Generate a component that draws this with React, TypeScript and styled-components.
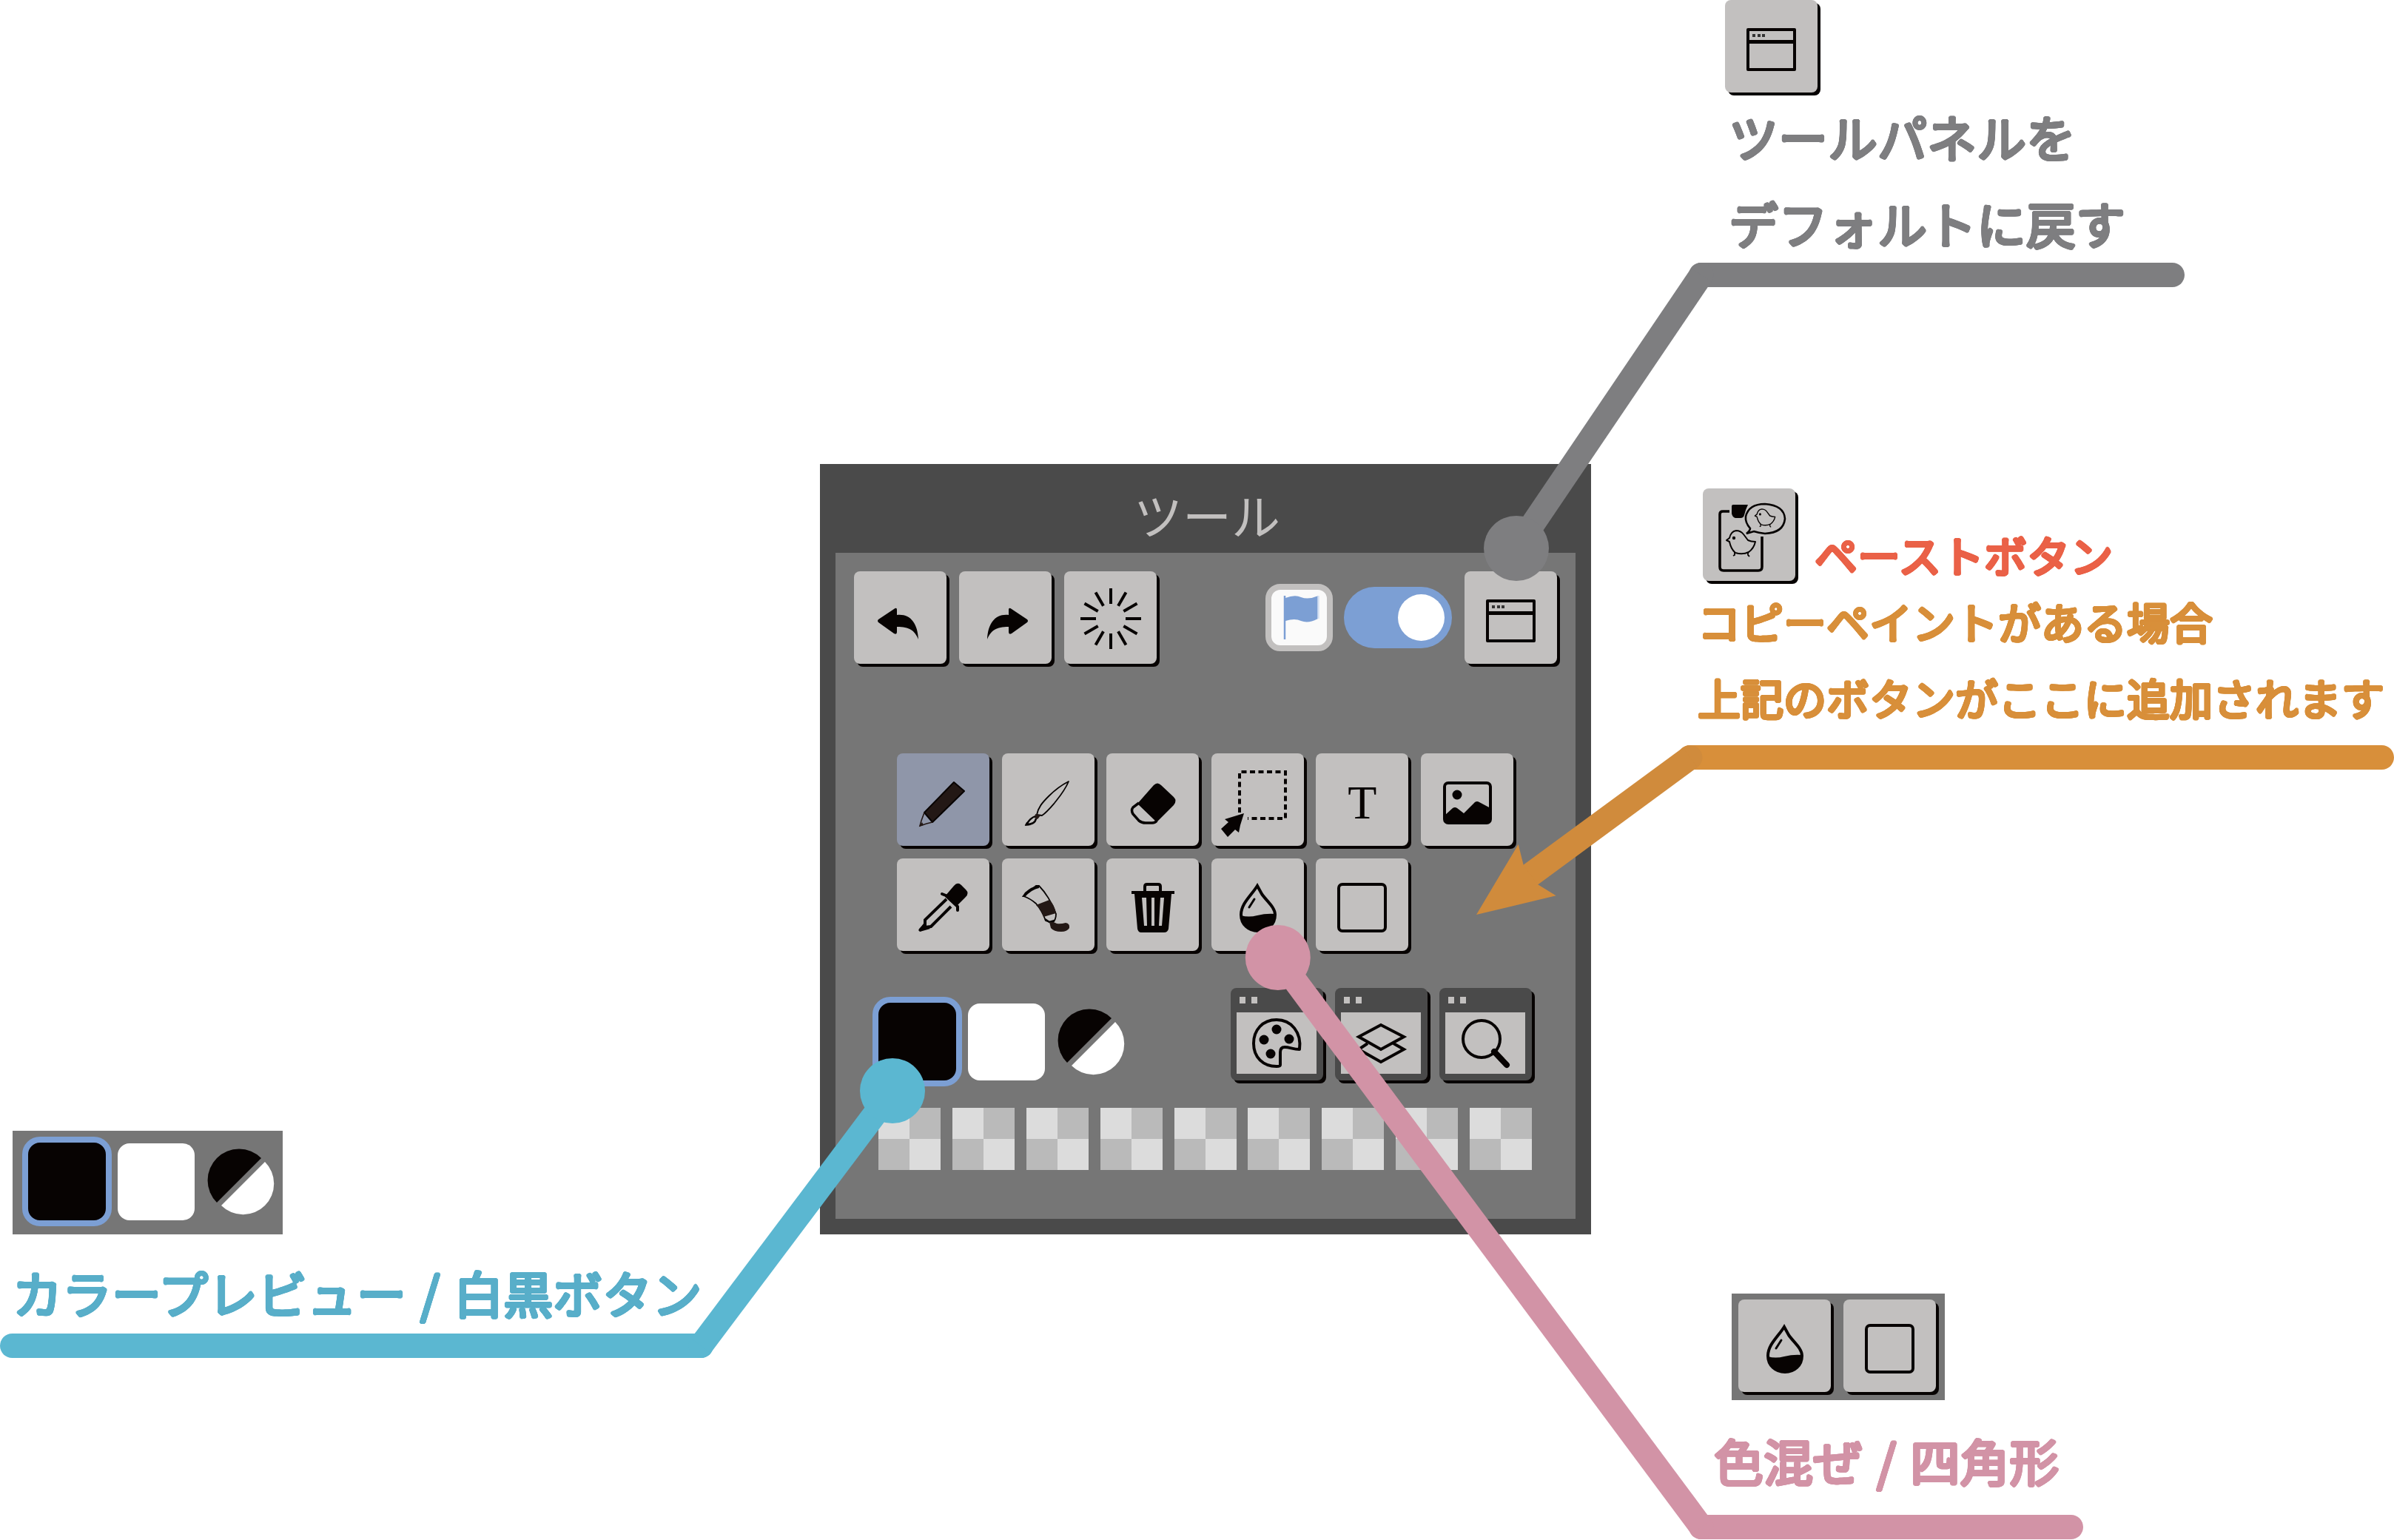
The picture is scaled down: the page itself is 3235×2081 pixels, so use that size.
import React, { useCallback, useLayoutEffect, useRef, useState } from "react";
import styled, { createGlobalStyle, css } from "styled-components";

const color = {
  frame: "#4a4a4a",
  body: "#767676",
  key: "#c2c0bf",
  keyActive: "#8f96a9",
  ink: "#070302",
  soot: "#231815",
  blue: "#7c9fd4",
  gray: "#7e7e80",
  amber: "#d88f3a",
  amberDark: "#d08b3c",
  red: "#ea6147",
  cyan: "#5bb7d1",
  cyanText: "#58aec9",
  pink: "#d293a6",
};

const GlobalStyle = createGlobalStyle`
  *, *::before, *::after { box-sizing: border-box; }
  body {
    margin: 0;
    background: #fff;
    font-family: "Noto Sans CJK JP", "Noto Sans", sans-serif;
  }
  button { font: inherit; }
`;

/* Thickens the strokes evenly in every direction, which also rounds their ends. */
const rounded = (r: number) => {
  const steps = 16;
  return Array.from({ length: steps }, (_, i) => {
    const a = (i / steps) * Math.PI * 2;
    return `${(Math.cos(a) * r).toFixed(2)}px ${(Math.sin(a) * r).toFixed(2)}px 0 currentColor`;
  }).join(", ");
};

/* ---------- layout ---------- */

const Page = styled.main`
  position: relative;
  display: grid;
  grid-template-columns: minmax(0, 1108fr) 1042px minmax(0, 1085fr);
  align-items: start;
  min-height: 100vh;
`;

const LeftColumn = styled.div`
  padding-top: 1528px;
`;

const CenterColumn = styled.div`
  padding-top: 627px;
`;

const RightColumn = styled.div`
  display: flex;
  flex-direction: column;
  padding-left: 117px;
`;

const Callout = styled.section<{ $color: string; $width?: number; $indent?: number; $top?: number }>`
  display: flex;
  flex-direction: column;
  align-items: flex-start;
  width: ${(p) => (p.$width ? `${p.$width}px` : "auto")};
  margin-left: ${(p) => p.$indent ?? 0}px;
  margin-top: ${(p) => p.$top ?? 0}px;
  color: ${(p) => p.$color};
`;

const CalloutHead = styled.div<{ $indent: number }>`
  display: flex;
  align-items: flex-end;
  gap: 26px;
  margin-left: ${(p) => p.$indent}px;
`;

const CalloutText = styled.p<{ $indent: number; $size: number; $line: number; $top?: number }>`
  margin: ${(p) => p.$top ?? 0}px 0 0 ${(p) => p.$indent}px;
  font-size: ${(p) => p.$size}px;
  line-height: ${(p) => p.$line}px;
  font-weight: 400;
  white-space: nowrap;
  text-shadow: ${rounded(2)};
`;

const ButtonName = styled.strong`
  padding-bottom: 6px;
  font-size: 58px;
  line-height: 60px;
  font-weight: 400;
  white-space: nowrap;
  color: ${color.red};
  text-shadow: ${rounded(2)};
`;

const Slash = styled.span`
  padding: 0 4px;
`;

const Rule = styled.div<{ $color: string; $top: number }>`
  align-self: stretch;
  height: 33px;
  margin-top: ${(p) => p.$top}px;
  border-radius: 17px;
  background: ${(p) => p.$color};
`;

const Sample = styled.div<{ $indent: number; $pad: string }>`
  display: flex;
  gap: 17px;
  margin-left: ${(p) => p.$indent}px;
  padding: ${(p) => p.$pad};
  background: ${color.body};
`;

/* ---------- panel ---------- */

const Panel = styled.section`
  padding: 0 21px 21px;
  background: ${color.frame};
`;

const PanelTitle = styled.h1`
  margin: 0;
  height: 120px;
  padding: 14px 0 0 4px;
  font-size: 66px;
  line-height: 106px;
  font-weight: 400;
  text-align: center;
  color: ${color.key};
`;

const PanelBody = styled.div`
  display: flex;
  flex-direction: column;
  padding: 25px 25px 66px;
  background: ${color.body};
`;

const TopBar = styled.div`
  display: flex;
  justify-content: space-between;
  margin-bottom: 121px;
`;

const Group = styled.div<{ $gap: number }>`
  display: flex;
  align-items: center;
  gap: ${(p) => p.$gap}px;
`;

const ToolGrid = styled.div`
  display: grid;
  grid-template-columns: repeat(6, 125px);
  justify-content: space-between;
  row-gap: 17px;
  margin: 0 59px 50px 58px;
`;

const ColorBar = styled.div`
  display: flex;
  justify-content: space-between;
  margin: 0 34px 29px 25px;
`;

const PreviewGroup = styled.div`
  display: flex;
  align-items: center;
  align-self: flex-end;
`;

const WindowKeyRow = styled.div`
  display: flex;
  gap: 16px;
  padding-bottom: 8px;
`;

const PaletteRow = styled.div`
  display: flex;
  justify-content: space-between;
  margin: 0 34px 0 33px;
`;

/* ---------- controls ---------- */

const keyShape = css`
  flex: none;
  display: block;
  width: 125px;
  height: 125px;
  padding: 0;
  border: 0;
  border-radius: 8px;
  box-shadow: 4px 4px 0 ${color.ink};
  cursor: pointer;
`;

const Key = styled.button<{ $active?: boolean }>`
  ${keyShape}
  background: ${(p) => (p.$active ? color.keyActive : color.key)};
  color: ${color.ink};
`;

const LetterKey = styled(Key)`
  padding-top: 9px;
  font-family: "Liberation Serif", serif;
  font-size: 64px;
  line-height: 116px;
`;

const WindowKey = styled.button`
  ${keyShape}
  background: ${color.frame};
  color: ${color.ink};
`;

const Drawing = styled.svg`
  display: block;
`;

const FlagLabel = styled.label`
  width: 91px;
  height: 91px;
  border: 8px solid ${color.key};
  border-radius: 20px;
  background: #fafafa;
`;

const Toggle = styled.input`
  appearance: none;
  position: relative;
  width: 146px;
  height: 83px;
  margin: 0 2px 0 0;
  border-radius: 42px;
  background: ${color.key};
  cursor: pointer;
  &::before {
    content: "";
    position: absolute;
    top: 10px;
    left: 10px;
    width: 63px;
    height: 63px;
    border-radius: 50%;
    background: #fff;
  }
  &:checked { background: ${color.blue}; }
  &:checked::before { left: 73px; }
`;

const PreviewSwatch = styled.button<{ $fill: string; $selected?: boolean }>`
  width: ${(p) => (p.$selected ? 121 : 104)}px;
  height: ${(p) => (p.$selected ? 121 : 104)}px;
  margin-right: ${(p) => (p.$selected ? 8 : 17)}px;
  padding: 0;
  border: ${(p) => (p.$selected ? `8px solid ${color.blue}` : "0")};
  border-radius: ${(p) => (p.$selected ? 24 : 16)}px;
  background: ${(p) => p.$fill};
  cursor: pointer;
`;

const SplitButton = styled.button`
  width: 91px;
  height: 91px;
  padding: 0;
  border: 0;
  background: transparent;
  cursor: pointer;
`;

const PaletteSwatch = styled.button`
  width: 84px;
  height: 84px;
  padding: 0;
  border: 0;
  background: conic-gradient(#bababa 25%, #dcdcdc 0 50%, #bababa 0 75%, #dcdcdc 0);
  cursor: pointer;
`;

const Overlay = styled.svg`
  position: absolute;
  inset: 0;
  width: 100%;
  height: 100%;
  overflow: visible;
  pointer-events: none;
`;

/* ---------- drawings ---------- */

const Glyph = ({ children, size = 125 }: { children: React.ReactNode; size?: number }) => (
  <Drawing width={size} height={size} viewBox={`0 0 ${size} ${size}`} fill="none" aria-hidden="true">
    {children}
  </Drawing>
);

const arrowPath =
  "M33 65 L54 51 Q58 48 58 52 V59 C76 57 86 70 87 92 C82 80 75 75 58 75 V82 Q58 86 54 84 L33 69 Q31 67 33 65Z";

const UndoIcon = () => (
  <Glyph>
    <path d={arrowPath} fill="currentColor" />
  </Glyph>
);

const RedoIcon = () => (
  <Glyph>
    <path d={arrowPath} fill="currentColor" transform="translate(125 0) scale(-1 1)" />
  </Glyph>
);

const BurstIcon = () => (
  <Glyph>
    <g stroke="currentColor" strokeWidth="4">
      {Array.from({ length: 12 }, (_, i) => (
        <path key={i} d="M63 23 V44" transform={`rotate(${i * 30} 63 64)`} />
      ))}
    </g>
  </Glyph>
);

const WindowIcon = () => (
  <Glyph>
    <rect x="31" y="40" width="63" height="54" stroke="currentColor" strokeWidth="4" strokeLinejoin="round" />
    <path d="M31 56.5 H94" stroke="currentColor" strokeWidth="5" />
    <path d="M37 46h4v4h-4z M44 46h4v4h-4z M50 46h4v4h-4z" fill="#333" />
  </Glyph>
);

const PencilIcon = () => (
  <Glyph>
    <path d="M77 39 L91 51 L48 93 L37 80 Z" fill={color.soot} stroke="currentColor" strokeWidth="2" strokeLinejoin="round" />
    <path d="M37 80 L33 91 L31 98 L40 95 L48 93" stroke={color.soot} strokeWidth="1.6" />
    <path d="M34 93 L30 99 L36 97 Z" fill={color.soot} />
  </Glyph>
);

const BrushIcon = () => (
  <Glyph>
    <path d="M90 38 C80 43 72 49 63 58 C54 67 49 73 47 83 L54 84 C60 80 65 74 71 67 C79 57 85 50 90 38Z" stroke="currentColor" strokeWidth="1.8" strokeLinejoin="round" />
    <path d="M45 82 L44 87 L48 89 L52 84 Z" fill={color.soot} />
    <path d="M45 85 C37 88 36 92 33 96 C39 96 45 95 46 88" stroke="currentColor" strokeWidth="2.4" />
    <path d="M31 98 L33 93 L39 97 Z" fill="currentColor" />
  </Glyph>
);

const EraserIcon = () => (
  <Glyph>
    <path d="M42 68 L64 43 Q69 38 74 43 L91 59 Q96 64 91 70 L68 93 Z" fill="currentColor" />
    <path d="M44 67 L36 73 Q33 77 36 82 L44 91 Q48 94 53 94 H62 Q66 94 68 91" stroke="currentColor" strokeWidth="3.5" />
  </Glyph>
);

const SelectIcon = () => (
  <Glyph>
    <path d="M38 80 V25 H100 V88 H49" stroke="currentColor" strokeWidth="4" strokeDasharray="7 4.5" />
    <path d="M44 81 L18 89 L23 93 L13 102 L22 113 L32 103 L37 107 L39 97 Z" fill="currentColor" />
  </Glyph>
);

const ImageIcon = () => (
  <Glyph>
    <rect x="32" y="40" width="62" height="54" rx="5" stroke="currentColor" strokeWidth="4" />
    <circle cx="49" cy="56" r="6.5" fill="currentColor" />
    <path d="M32 84 L43 74 Q46 72 49 74 L58 81 L73 66 Q76 64 79 66 L94 74 V92 Q94 94 92 94 H36 Q32 94 32 90Z" fill="currentColor" />
  </Glyph>
);

const DropperIcon = () => (
  <Glyph>
    <path d="M65 51 L77 37 Q82 31 87 36 L93 42 Q98 47 93 52 L80 65 Z" fill="currentColor" />
    <path d="M61 48 L66 50 L82 65 L82 70" stroke="currentColor" strokeWidth="4" strokeLinecap="round" strokeLinejoin="round" />
    <path d="M67 55 L38 83 V90 L31 97 M73 65 L46 92 L38 93" stroke="currentColor" strokeWidth="4" />
    <path d="M36 88 L29 97 L31 99 L45 95 Z" fill="currentColor" />
  </Glyph>
);

const TubeIcon = () => (
  <Glyph>
    <path d="M29 51 L46 37 L50 37 C58 45 68 60 73 75 C73 81 72 84 68 87 L59 84 C56 76 52 68 46 61 Q38 54 29 51Z" stroke="currentColor" strokeWidth="1.8" />
    <path d="M27 52 L31 46 Q40 38 50 36 L50 40 Q40 42 31 52Z" fill="currentColor" />
    <path d="M46 63 L64 56 Q71 63 73 74 L56 79 Q54 70 46 63Z" fill={color.soot} />
    <path d="M58 82 L64 86 L71 84" stroke="currentColor" strokeWidth="2.5" />
    <path d="M64 86 Q69 85 74 88 Q79 89 86 87 Q92 88 91 94 Q88 99 80 99 Q70 99 66 94Z" fill={color.soot} />
  </Glyph>
);

const TrashIcon = () => (
  <Glyph>
    <path d="M52 46 V38 Q52 35 55 35 H70 Q73 35 73 38 V46" stroke="currentColor" strokeWidth="4" />
    <path
      fill="currentColor"
      fillRule="evenodd"
      d="M34 44 H92 V48 H88 L84 95 Q83 100 78 100 H47 Q43 100 42 95 L38 48 H34Z M48 53 L51 91 H55 L54 53Z M61 53 V91 H65 V53Z M73 53 L71 91 H75 L78 53Z"
    />
  </Glyph>
);

const DropIcon = () => (
  <Glyph>
    <path d="M62 37 C54 50 40 61 40 76 C40 89 50 98 63 98 C76 98 86 89 86 76 C86 66 75 58 68 48 Z" stroke="currentColor" strokeWidth="4" strokeLinejoin="miter" />
    <path d="M40 77 Q50 80 62 77 Q74 74 86 75 C87 89 76 98 63 98 C50 98 40 89 40 77Z" fill="currentColor" />
    <path d="M58 55 L51 66" stroke="currentColor" strokeWidth="3" strokeLinecap="round" />
  </Glyph>
);

const SquareIcon = () => (
  <Glyph>
    <rect x="31" y="35" width="63" height="63" rx="5" stroke="currentColor" strokeWidth="4" />
  </Glyph>
);

const WindowFrame = () => (
  <>
    <path d="M12 12h8v9h-8z M28 12h8v9h-8z" fill={color.key} />
    <path d="M8 33h108v83H8z" fill={color.key} />
  </>
);

const PaletteIcon = () => (
  <Glyph>
    <WindowFrame />
    <path d="M93 83 C96 60 82 43 62 43 C43 43 31 57 31 75 C31 94 44 106 62 106 Q67 106 67 104 V87 Q67 80 73 80 C80 80 84 83 93 83Z" stroke="currentColor" strokeWidth="4" strokeLinejoin="round" />
    <g fill="currentColor">
      <circle cx="62" cy="56" r="6.5" />
      <circle cx="45" cy="70" r="6.5" />
      <circle cx="79" cy="69" r="6.5" />
      <circle cx="54" cy="89" r="6.5" />
    </g>
  </Glyph>
);

const LayersIcon = () => (
  <Glyph>
    <WindowFrame />
    <g stroke="currentColor" strokeWidth="4">
      <path d="M62 50 L93 66 L62 83 L32 66 Z" />
      <path d="M44 75 L32 83 L62 100 L93 83 L79 75" />
    </g>
  </Glyph>
);

const ZoomIcon = () => (
  <Glyph>
    <WindowFrame />
    <circle cx="57" cy="69" r="25" stroke="currentColor" strokeWidth="4" />
    <path d="M74 86 L91 104" stroke="currentColor" strokeWidth="8" strokeLinecap="round" />
  </Glyph>
);

const Chick = () => (
  <>
    <path d="M32 70 L36 67 Q38 58 45 57 Q51 57 55 62 L61 70 Q65 72 71 72 Q69 81 62 86 Q54 90 44 87 Q38 82 36 72 Z" stroke="currentColor" strokeWidth="2" strokeLinejoin="round" />
    <circle cx="42" cy="67" r="2.2" fill="currentColor" />
    <path d="M43 86 V90 L41 91 M61 86 V90 L63 92" stroke="currentColor" strokeWidth="1.8" />
  </>
);

const PasteIcon = () => (
  <Glyph>
    <path d="M36 31 H27 Q23 31 23 35 V106 Q23 111 28 111 H75 Q80 111 80 106 V65" stroke="currentColor" strokeWidth="3.6" />
    <path d="M39 24 Q39 22 41 22 H61 Q58 28 56 36 Q55 40 51 40 H44 Q40 39 39 34Z" fill="currentColor" />
    <path d="M64 54 Q57 46 58 38 Q62 21 84 21 Q110 23 111 41 Q109 60 84 61 Q75 60 69 58 L59 61 Q64 57 64 54Z" stroke="currentColor" strokeWidth="2.6" />
    <Chick />
    <g transform="translate(48 -12) scale(0.7)">
      <Chick />
    </g>
  </Glyph>
);

const FlagIcon = () => (
  <Drawing width="75" height="75" viewBox="8 8 75 75" fill="none" aria-hidden="true">
    <path d="M26 16 V75" stroke={color.blue} strokeWidth="2.5" />
    <path d="M27 19 Q40 14 48 18 Q58 22 71 16 V47 Q58 54 48 50 Q40 46 27 50Z" fill={color.blue} />
    <path d="M71.5 16 V47" stroke="#d5e0f2" strokeWidth="2.5" />
  </Drawing>
);

const SplitIcon = () => (
  <Glyph size={91}>
    <path d="M13 74 A42 42 0 0 1 73 14 Z" fill={color.ink} />
    <path d="M78 19 A41 41 0 0 1 19 78 Z" fill="#fff" />
  </Glyph>
);

/* ---------- parts ---------- */

type NodeRef = (el: HTMLElement | null) => void;

const ColorPreview = ({ anchor }: { anchor?: NodeRef }) => (
  <PreviewGroup>
    <PreviewSwatch ref={anchor} $fill={color.ink} $selected aria-label="黒" />
    <PreviewSwatch $fill="#fff" aria-label="白" />
    <SplitButton aria-label="白黒">
      <SplitIcon />
    </SplitButton>
  </PreviewGroup>
);

/* Each connector leaves one end of a callout rule and lands on a spot of its target. */
const connectors = [
  { id: "gray", target: "reset", dx: 70, dy: -31, side: "left", color: color.gray, arrow: false },
  { id: "amber", target: "slot", dx: 75, dy: 76, side: "left", color: color.amberDark, arrow: true },
  { id: "cyan", target: "preview", dx: 27, dy: 127, side: "right", color: color.cyan, arrow: false },
  { id: "pink", target: "mix", dx: 90, dy: 134, side: "left", color: color.pink, arrow: false },
];

type Line = { id: string; color: string; arrow: boolean; x1: number; y1: number; x2: number; y2: number };

const HEAD = 88;

const Connector = ({ line }: { line: Line }) => {
  const { x1, y1, x2, y2 } = line;
  const length = Math.hypot(x2 - x1, y2 - y1);
  const k = line.arrow ? (length - HEAD) / length : 1;
  const angle = (Math.atan2(y1 - y2, x1 - x2) * 180) / Math.PI;
  return (
    <g>
      <circle cx={x1} cy={y1} r="16.5" fill={line.color} />
      <path d={`M${x1} ${y1} L${x1 + (x2 - x1) * k} ${y1 + (y2 - y1) * k}`} stroke={line.color} strokeWidth="33" />
      {line.arrow ? (
        <path d="M0 0 L102 -43 L91 -16 V16 L102 43 Z" fill={line.color} transform={`translate(${x2} ${y2}) rotate(${angle})`} />
      ) : (
        <circle cx={x2} cy={y2} r="44" fill={line.color} />
      )}
    </g>
  );
};

export default function App() {
  const page = useRef<HTMLElement | null>(null);
  const nodes = useRef<Record<string, HTMLElement | null>>({});
  const [lines, setLines] = useState<Line[]>([]);

  const mark = useCallback(
    (name: string): NodeRef =>
      (el) => {
        nodes.current[name] = el;
      },
    []
  );

  useLayoutEffect(() => {
    const measure = () => {
      if (!page.current) return;
      const origin = page.current.getBoundingClientRect();
      const next: Line[] = [];
      connectors.forEach((c) => {
        const rule = nodes.current[c.id]?.getBoundingClientRect();
        const target = nodes.current[c.target]?.getBoundingClientRect();
        if (!rule || !target) return;
        next.push({
          id: c.id,
          color: c.color,
          arrow: c.arrow,
          x1: (c.side === "left" ? rule.left + 17 : rule.right - 17) - origin.left,
          y1: rule.top + rule.height / 2 - origin.top,
          x2: target.left + c.dx - origin.left,
          y2: target.top + c.dy - origin.top,
        });
      });
      setLines(next);
    };
    measure();
    window.addEventListener("resize", measure);
    return () => window.removeEventListener("resize", measure);
  }, []);

  return (
    <>
      <GlobalStyle />
      <Page ref={page}>
        <LeftColumn>
          <Callout $color={color.cyanText} $width={964}>
            <Sample $indent={17} $pad="8px 11px 11px 13px">
              <ColorPreview />
            </Sample>
            <CalloutText $indent={17} $size={67} $line={100} $top={28}>
              カラープレビュー<Slash> / </Slash>白黒ボタン
            </CalloutText>
            <Rule ref={mark("cyan")} $color={color.cyan} $top={6} />
          </Callout>
        </LeftColumn>

        <CenterColumn>
          <Panel>
            <PanelTitle>ツール</PanelTitle>
            <PanelBody>
              <TopBar>
                <Group $gap={17}>
                  <Key aria-label="元に戻す"><UndoIcon /></Key>
                  <Key aria-label="やり直す"><RedoIcon /></Key>
                  <Key aria-label="クリア"><BurstIcon /></Key>
                </Group>
                <Group $gap={15}>
                  <FlagLabel htmlFor="flag-toggle" aria-label="フラグ"><FlagIcon /></FlagLabel>
                  <Toggle id="flag-toggle" type="checkbox" defaultChecked />
                  <Key ref={mark("reset")} aria-label="ツールパネルをデフォルトに戻す"><WindowIcon /></Key>
                </Group>
              </TopBar>

              <ToolGrid>
                <Key $active aria-label="鉛筆"><PencilIcon /></Key>
                <Key aria-label="筆"><BrushIcon /></Key>
                <Key aria-label="消しゴム"><EraserIcon /></Key>
                <Key aria-label="選択"><SelectIcon /></Key>
                <LetterKey>T</LetterKey>
                <Key aria-label="画像"><ImageIcon /></Key>
                <Key aria-label="スポイト"><DropperIcon /></Key>
                <Key aria-label="塗りつぶし"><TubeIcon /></Key>
                <Key aria-label="削除"><TrashIcon /></Key>
                <Key ref={mark("mix")} aria-label="色混ぜ"><DropIcon /></Key>
                <Key aria-label="四角形"><SquareIcon /></Key>
                <div ref={mark("slot")} />
              </ToolGrid>

              <ColorBar>
                <ColorPreview anchor={mark("preview")} />
                <WindowKeyRow>
                  <WindowKey aria-label="カラー"><PaletteIcon /></WindowKey>
                  <WindowKey aria-label="レイヤー"><LayersIcon /></WindowKey>
                  <WindowKey aria-label="ズーム"><ZoomIcon /></WindowKey>
                </WindowKeyRow>
              </ColorBar>

              <PaletteRow>
                {Array.from({ length: 9 }, (_, i) => (
                  <PaletteSwatch key={i} aria-label={`パレット ${i + 1}`} />
                ))}
              </PaletteRow>
            </PanelBody>
          </Panel>
        </CenterColumn>

        <RightColumn>
          <Callout $color={color.gray} $width={670} $indent={15}>
            <CalloutHead $indent={49}>
              <Key aria-label="ツールパネルをデフォルトに戻す"><WindowIcon /></Key>
            </CalloutHead>
            <CalloutText $indent={54} $size={67} $line={117}>
              ツールパネルを
              <br />
              デフォルトに戻す
            </CalloutText>
            <Rule ref={mark("gray")} $color={color.gray} $top={-4} />
          </Callout>

          <Callout $color={color.amber} $top={272}>
            <CalloutHead $indent={34}>
              <Key aria-label="ペースト"><PasteIcon /></Key>
              <ButtonName>ペーストボタン</ButtonName>
            </CalloutHead>
            <CalloutText $indent={27} $size={58} $line={103} $top={3}>
              コピーペイントがある場合
              <br />
              上記のボタンがここに追加されます
            </CalloutText>
            <Rule ref={mark("amber")} $color={color.amber} $top={13} />
          </Callout>

          <Callout $color={color.pink} $width={533} $indent={15} $top={708}>
            <Sample $indent={58} $pad="8px 12px 11px 9px">
              <Key aria-label="色混ぜ"><DropIcon /></Key>
              <Key aria-label="四角形"><SquareIcon /></Key>
            </Sample>
            <CalloutText $indent={34} $size={67} $line={100} $top={31}>
              色混ぜ<Slash> / </Slash>四角形
            </CalloutText>
            <Rule ref={mark("pink")} $color={color.pink} $top={24} />
          </Callout>
        </RightColumn>

        <Overlay aria-hidden="true">
          {lines.map((line) => (
            <Connector key={line.id} line={line} />
          ))}
        </Overlay>
      </Page>
    </>
  );
}
